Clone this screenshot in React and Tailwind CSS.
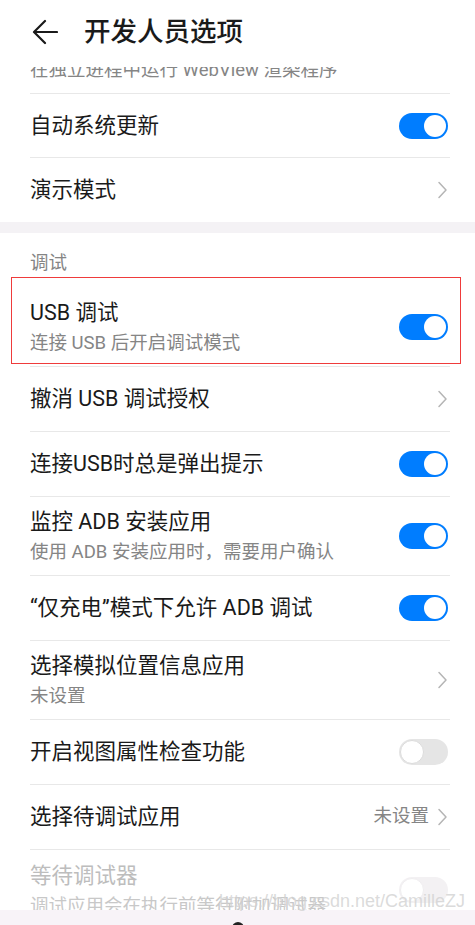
import React from "react";

const font = "font-['Roboto','Noto_Sans_CJK_SC',sans-serif]";

const Toggle = ({ on, faded }) => {
  if (on) {
    return (
      <div className="w-[49px] h-[26px] rounded-full bg-[#007dff] flex items-center justify-end px-[2px] shrink-0">
        <div className="w-[22px] h-[22px] rounded-full bg-white" />
      </div>
    );
  }
  return (
    <div
      className={
        "w-[49px] h-[26px] rounded-full flex items-center px-[1px] shrink-0 " +
        (faded ? "bg-[#f3f1f3]" : "bg-[#e5e5e5]")
      }
    >
      <div
        className={
          "w-[24px] h-[24px] rounded-full bg-white border " +
          (faded ? "border-[#f0eef0]" : "border-[#dcdcdc]")
        }
      />
    </div>
  );
};

const Chevron = () => (
  <svg width="11" height="18" viewBox="0 0 11 18" className="shrink-0">
    <path d="M2 1.5 L9 9 L2 16.5" fill="none" stroke="#b5b5b5" strokeWidth="1.5" strokeLinecap="round" strokeLinejoin="round" />
  </svg>
);

const Row = ({ title, sub, right, h, border = true, faded, children }) => (
  <div
    className={
      "relative flex items-center justify-between " +
      h +
      (border ? " border-b border-[#e8e8e8]" : "")
    }
  >
    <div className="flex flex-col">
      <p className={"text-[21.5px] leading-[28px] " + (faded ? "text-[#bdbdbd]" : "text-[#1a1a1a]")}>{title}</p>
      {sub && (
        <p className={"text-[18.5px] leading-[24px] mt-[4px] " + (faded ? "text-[#c8c8c8]" : "text-[#858585]")}>{sub}</p>
      )}
    </div>
    <div className="flex items-center gap-[8px] pr-[2px]">{right}</div>
    {children}
  </div>
);

export default function App() {
  return (
    <div className={"relative w-[475px] h-[925px] bg-white overflow-hidden flex flex-col " + font}>
      {/* 顶部标题栏 */}
      <div className="h-[67px] shrink-0 flex items-start pt-[18px] pl-[32px]">
        <svg width="26" height="26" viewBox="0 0 26 26" className="mt-[1px]">
          <path d="M25 13 H2.5 M13 2 L2 13 L13 24" fill="none" stroke="#1a1a1a" strokeWidth="2.2" strokeLinecap="round" strokeLinejoin="round" />
        </svg>
        <h1 className="ml-[26px] text-[26.5px] leading-[28px] font-medium text-[#1a1a1a]">开发人员选项</h1>
      </div>

      <div className="flex-1 overflow-hidden">
        <div className="mx-[30px] w-[420px]">
          {/* 被遮挡的上一项 */}
          <div className="h-[27px] overflow-hidden border-b border-[#e8e8e8]">
            <p className="-mt-[9px] text-[18.5px] leading-[24px] text-[#858585]">在独立进程中运行 WebView 渲染程序</p>
          </div>
          <Row title="自动系统更新" h="h-[64px]" right={<Toggle on />} />
          <Row title="演示模式" h="h-[64px]" border={false} right={<Chevron />} />
        </div>

        <div className="h-[11px] bg-[#f4f2f5]" />

        <div className="mx-[30px] w-[420px]">
          <div className="h-[55px] pt-[20px]">
            <p className="text-[18.5px] leading-[20px] text-[#858585]">调试</p>
          </div>
          <Row title="USB 调试" sub="连接 USB 后开启调试模式" h="h-[79px]" right={<Toggle on />}>
            <span className="absolute -left-[19px] -top-[11px] w-[450px] h-[87px] border border-[#ef3b3b] pointer-events-none" />
          </Row>
          <Row title="撤消 USB 调试授权" h="h-[65px]" right={<Chevron />} />
          <Row title="连接USB时总是弹出提示" h="h-[65px]" right={<Toggle on />} />
          <Row title="监控 ADB 安装应用" sub="使用 ADB 安装应用时，需要用户确认" h="h-[79px]" right={<Toggle on />} />
          <Row title="“仅充电”模式下允许 ADB 调试" h="h-[65px]" right={<Toggle on />} />
          <Row title="选择模拟位置信息应用" sub="未设置" h="h-[79px]" right={<Chevron />} />
          <Row title="开启视图属性检查功能" h="h-[65px]" right={<Toggle />} />
          <Row
            title="选择待调试应用"
            h="h-[65px]"
            right={
              <>
                <span className="text-[18.5px] text-[#858585]">未设置</span>
                <Chevron />
              </>
            }
          />
          <Row title="等待调试器" sub="调试应用会在执行前等待附加调试器" h="h-[79px]" border={false} faded right={<Toggle faded />} />
        </div>
      </div>

      {/* 底部导航条 */}
      <div className="h-[15px] shrink-0 bg-[#f8f3f8] flex justify-center overflow-hidden">
        <div className="mt-[12px] w-[12px] h-[12px] rounded-full bg-[#222]" />
      </div>

      {/* 水印 */}
      <span className="absolute right-[10px] top-[889px] text-[18px] leading-[24px] text-[#d2d2d2]/80 font-['Liberation_Sans',sans-serif]">
        https://blog.csdn.net/CamilleZJ
      </span>
    </div>
  );
}
